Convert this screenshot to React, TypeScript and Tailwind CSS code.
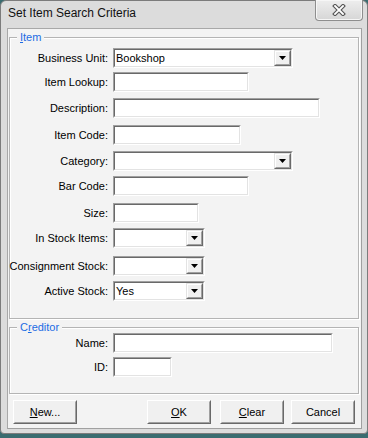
import React from "react";

const FONT = { fontFamily: '"Liberation Sans", Arial, sans-serif' };

function Arrow() {
  return (
    <svg width="7" height="4" viewBox="0 0 7 4" className="block">
      <polygon points="0,0 7,0 3.5,4" fill="#000" />
    </svg>
  );
}

function Field({ w, combo, value }: { w: number; combo?: boolean; value?: string }) {
  return (
    <div
      className="h-[20px] flex border border-t-[#a0a0a0] border-l-[#a0a0a0] border-b-[#ffffff] border-r-[#ffffff]"
      style={{ width: w }}
    >
      <div className="flex-1 flex border border-t-[#696969] border-l-[#696969] border-b-[#e3e3e3] border-r-[#e3e3e3] bg-white">
        <div className="flex-1 flex items-center pl-[1px] text-[11px] text-black leading-none">{value}</div>
        {combo && (
          <div className="w-[17px] flex border border-t-[#e3e3e3] border-l-[#e3e3e3] border-b-[#696969] border-r-[#696969]">
            <div className="flex-1 flex items-center justify-center bg-[#f0f0f0] border border-t-white border-l-white border-b-[#a0a0a0] border-r-[#a0a0a0]">
              <Arrow />
            </div>
          </div>
        )}
      </div>
    </div>
  );
}

function Row({ label, mt, children }: { label: string; mt: number; children: React.ReactNode }) {
  return (
    <div className="flex items-center" style={{ marginTop: mt }}>
      <div className="w-[98px] flex justify-end whitespace-nowrap text-[11px] text-black leading-none">{label}</div>
      <div className="ml-[5px]">{children}</div>
    </div>
  );
}

function Btn({ children }: { children: React.ReactNode }) {
  return (
    <div className="w-[64px] h-[24px] flex border border-t-white border-l-white border-b-[#696969] border-r-[#696969]">
      <div className="flex-1 flex items-center justify-center bg-[#f0f0f0] border border-t-[#f0f0f0] border-l-[#f0f0f0] border-b-[#a0a0a0] border-r-[#a0a0a0] text-[11px] text-black leading-none">
        {children}
      </div>
    </div>
  );
}

function Group({ label, h, children }: { label: React.ReactNode; h: number; children: React.ReactNode }) {
  return (
    <div
      className="relative ml-[1px] w-[350px] border border-[#b4b4b4] shadow-[inset_1px_1px_0_#ffffff,1px_1px_0_#ffffff]"
      style={{ height: h }}
    >
      <div className="absolute left-[7px] top-[-7px] px-[3px] bg-[#f3f3f3] text-[11px] leading-[13px] text-[#1c6ce4]">
        {label}
      </div>
      {children}
    </div>
  );
}

export default function App() {
  return (
    <div className="w-[368px] h-[438px] bg-[#3a6c70] overflow-hidden" style={FONT}>
      <div className="relative w-[368px] h-[434px] flex flex-col bg-[#dcdcdc] border border-[#7c7c7c] rounded-t-[6px] rounded-b-[4px] pl-[6px] pr-[5px] pb-[4px]">
        {/* title bar */}
        <div className="h-[27px] flex items-center pl-[1px]">
          <span className="text-[12px] text-[#111] leading-none mt-[-3px]">Set Item Search Criteria</span>
        </div>
        <div className="absolute top-[-1px] right-[4px] w-[48px] h-[21px] rounded-b-[4px] border border-[#8e8e8e] border-t-0 bg-gradient-to-b from-[#eeeeee] to-[#d6d6d6] shadow-[inset_0_0_0_1px_#f6f6f6] flex items-center justify-center">
          <svg width="14" height="12" viewBox="0 0 14 12">
            <path d="M3 2 L11 10 M11 2 L3 10" stroke="#555" strokeWidth="4" strokeLinecap="square" />
            <path d="M3 2 L11 10 M11 2 L3 10" stroke="#fff" strokeWidth="1.8" strokeLinecap="square" />
          </svg>
        </div>
        {/* client */}
        <div className="flex-1 flex flex-col bg-[#f3f3f3] border border-t-[#a8a8a8] border-l-[#a8a8a8] border-r-[#a0a0a0] border-b-[#a0a0a0]">
          <div className="mt-[8px]">
            <Group
              h={282}
              label={
                <span>
                  <span className="underline">I</span>tem
                </span>
              }
            >
              <div className="flex flex-col pt-[10px]">
                <Row label="Business Unit:" mt={0}>
                  <Field w={180} combo value="Bookshop" />
                </Row>
                <Row label="Item Lookup:" mt={4}>
                  <Field w={136} />
                </Row>
                <Row label="Description:" mt={6}>
                  <Field w={207} />
                </Row>
                <Row label="Item Code:" mt={7}>
                  <Field w={128} />
                </Row>
                <Row label="Category:" mt={6}>
                  <Field w={180} combo />
                </Row>
                <Row label="Bar Code:" mt={5}>
                  <Field w={136} />
                </Row>
                <Row label="Size:" mt={7}>
                  <Field w={86} />
                </Row>
                <Row label="In Stock Items:" mt={5}>
                  <Field w={92} combo />
                </Row>
                <Row label="Consignment Stock:" mt={8}>
                  <Field w={92} combo />
                </Row>
                <Row label="Active Stock:" mt={5}>
                  <Field w={92} combo value="Yes" />
                </Row>
              </div>
            </Group>
          </div>
          <div className="mt-[8px]">
            <Group
              h={67}
              label={
                <span>
                  C<span className="underline">r</span>editor
                </span>
              }
            >
              <div className="flex flex-col pt-[5px]">
                <Row label="Name:" mt={0}>
                  <Field w={220} />
                </Row>
                <Row label="ID:" mt={4}>
                  <Field w={59} />
                </Row>
              </div>
            </Group>
          </div>
          <div className="mt-[6px] flex items-center pl-[5px]">
            <Btn>
              <span>
                <span className="underline">N</span>ew...
              </span>
            </Btn>
            <div className="ml-[70px]">
              <Btn>
                <span>
                  <span className="underline">O</span>K
                </span>
              </Btn>
            </div>
            <div className="ml-[9px]">
              <Btn>
                <span>
                  <span className="underline">C</span>lear
                </span>
              </Btn>
            </div>
            <div className="ml-[7px]">
              <Btn>Cancel</Btn>
            </div>
          </div>
        </div>
      </div>
    </div>
  );
}
